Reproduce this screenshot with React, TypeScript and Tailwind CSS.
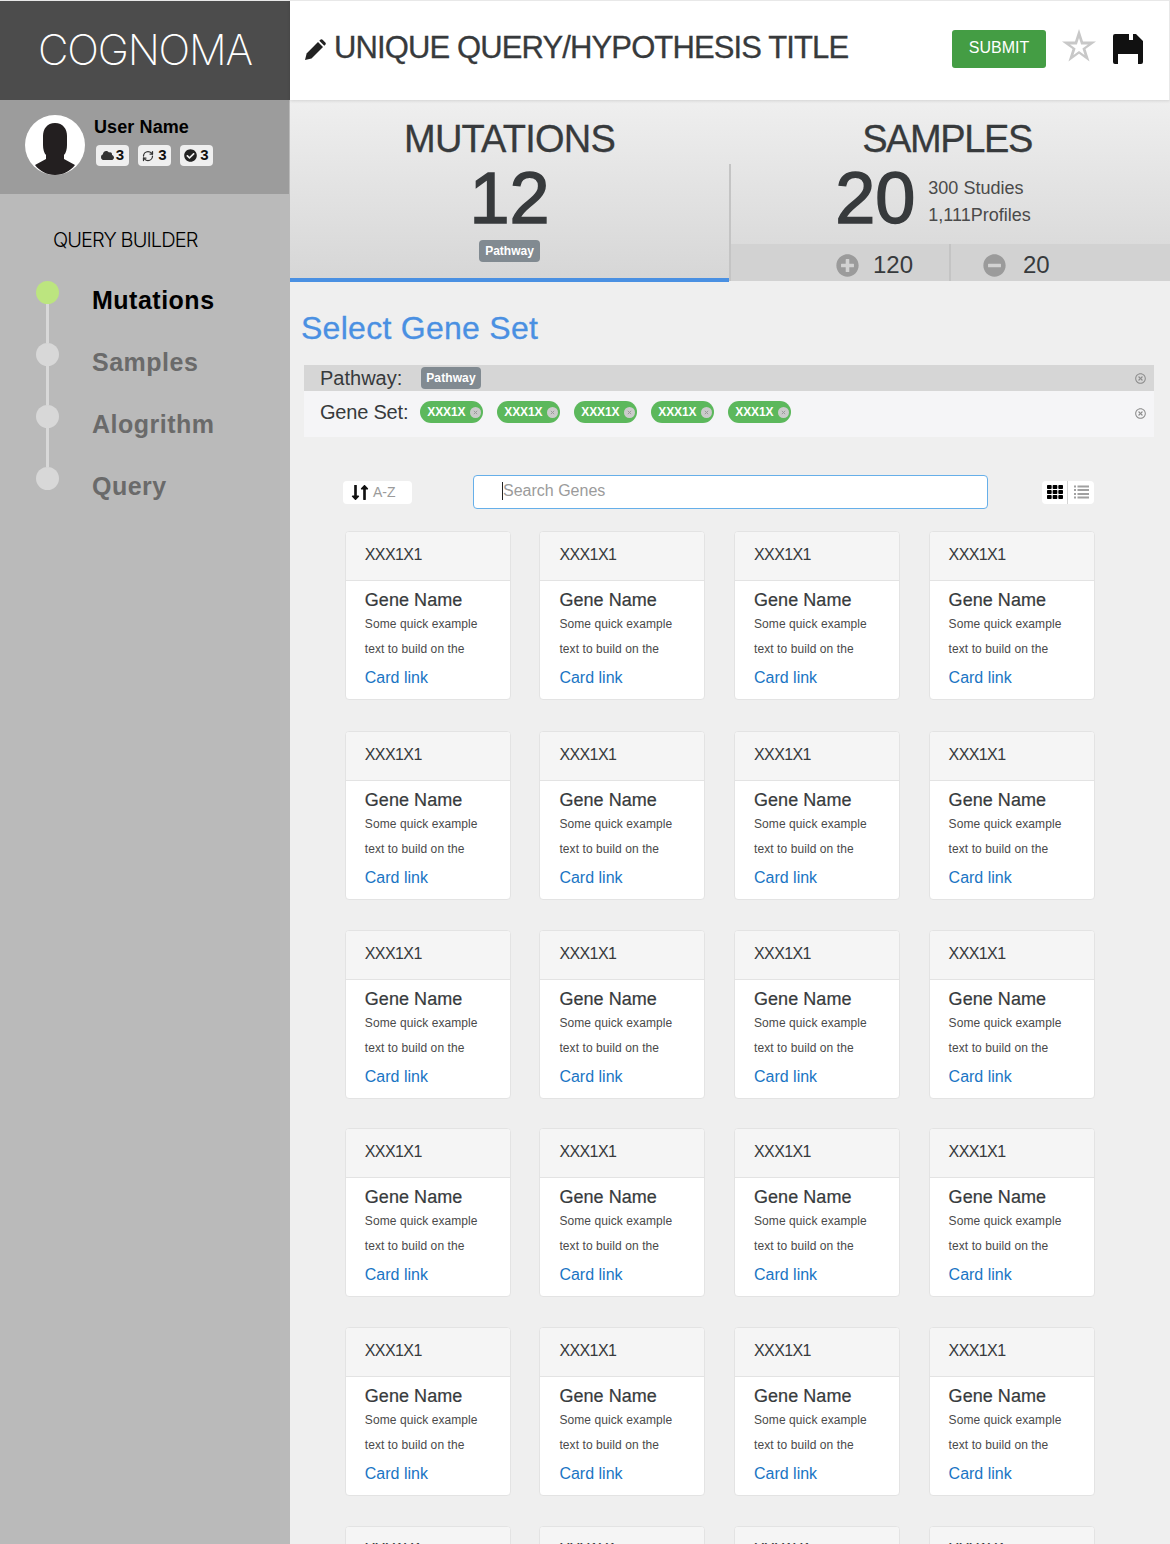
import { FaCheckCircle, FaCloud, FaLongArrowAltDown, FaLongArrowAltUp, FaMinusCircle, FaPlusCircle, FaRegTimesCircle, FaTh } from "react-icons/fa";
import { RefreshCw } from "lucide-react";

const steps = [
  { label: "Mutations", active: true },
  { label: "Samples", active: false },
  { label: "Alogrithm", active: false },
  { label: "Query", active: false },
];

function Avatar() {
  return (
    <svg viewBox="0 0 60 60" className="w-[60px] h-[60px] shrink-0">
      <circle cx="30" cy="30" r="30" fill="#fff" />
      <path
        d="M18 21c0-7 4-13 12-13s12 6 12 13v9c0 4-1 8-3 10v4l11 6c-4.500 6-12 10-20 10S14.500 56 10 50l11-6v-4c-2-2-3-6-3-10z"
        fill="#231f20"
      />
    </svg>
  );
}

function PencilIcon() {
  return (
    <svg viewBox="0 0 21 21" className="w-[21px] h-[21px] mt-[38px] shrink-0" fill="#222">
      <path d="M0 21l1.600-6.500L13 3l5 5L6.500 19.400z" />
      <path d="M14.300 1.700l1-1c.7-.7 1.600-.7 2.300 0l2.700 2.700c.7.700.7 1.600 0 2.300l-1 1z" />
    </svg>
  );
}

function StarIcon() {
  return (
    <svg viewBox="0 0 36 35" className="w-[36px] h-[33px] ml-[15px] mt-[28px] shrink-0" fill="#c8c8c8" fillRule="evenodd">
      <path d="M18 0l4.270 13.130H36.070L24.900 21.240l4.270 13.130L18 26.260 6.830 34.370l4.270-13.130L-.07 13.130h13.800zM18 9.500l-2.250 6.910H8.490l5.880 4.270-2.250 6.910L18 23.320l5.880 4.270-2.250-6.910 5.880-4.270h-7.260z" />
    </svg>
  );
}

function SaveIcon() {
  return (
    <svg viewBox="0 0 30 30" className="w-[30px] h-[30px] ml-[16px] mt-[33px] shrink-0" fill="#111" fillRule="evenodd">
      <path d="M2 0h21l7 7v21a2 2 0 0 1-2 2H2a2 2 0 0 1-2-2V2a2 2 0 0 1 2-2zM16 0v6h4V0zM5 20v10h20V20z" />
    </svg>
  );
}

function ListIcon() {
  return (
    <svg viewBox="0 0 15 14" className="w-[15px] h-[14px]" fill="#a0a0a0">
      <rect x="0" y="0.500" width="2" height="2" />
      <rect x="3.500" y="0.500" width="11.500" height="2" />
      <rect x="0" y="4" width="2" height="2" />
      <rect x="3.500" y="4" width="11.500" height="2" />
      <rect x="0" y="8" width="2" height="2" />
      <rect x="3.500" y="8" width="11.500" height="2" />
      <rect x="0" y="11.500" width="2" height="2" />
      <rect x="3.500" y="11.500" width="11.500" height="2" />
    </svg>
  );
}

function UserBadge({ icon, gap }: { icon: React.ReactNode; gap: string }) {
  return (
    <span className={`flex items-center justify-center ${gap} w-[33px] h-[21px] bg-[#efefef] rounded-[4px] text-[15px] font-bold text-[#111]`}>
      {icon}
      3
    </span>
  );
}

function GeneChip() {
  return (
    <span className="flex items-center justify-between w-[63px] h-[22px] pl-[7px] pr-[2px] bg-[#5cb85c] rounded-full text-white text-[12px] tracking-[-0.100px] font-bold">
      XXX1X
      <svg viewBox="0 0 10 10" className="w-[11px] h-[11px]">
        <circle cx="5" cy="5" r="5" fill="#cbcbcb" />
        <path d="M3.500 3.500l3 3m0-3l-3 3" stroke="#9a9a9a" strokeWidth="0.900" />
      </svg>
    </span>
  );
}

function GeneCard() {
  return (
    <div className="h-[169px] bg-white border border-[#e3e3e3] rounded-[4px] overflow-hidden">
      <div className="h-[49px] bg-[#f5f5f5] border-b border-[#e3e3e3] pl-[19px] pt-[13px] text-[16px] leading-[20px] tracking-[-0.600px] text-[#373a3c]">
        XXX1X1
      </div>
      <div className="pl-[19px]">
        <div className="mt-[8px] text-[18px] leading-[22px] tracking-[0.050px] text-[#373a3c] [-webkit-text-stroke:0.2px_#373a3c]">Gene Name</div>
        <div className="mt-[1px] text-[12px] leading-[25px] tracking-[0.080px] text-[#4a4a4a]">
          <div>Some quick example</div>
          <div>text to build on the</div>
        </div>
        <div className="mt-[6px] text-[16px] leading-[20px] text-[#1a75c4]">Card link</div>
      </div>
    </div>
  );
}

export default function App() {
  return (
    <div className="flex w-[1170px] h-[1544px] overflow-hidden bg-[#efefef] font-['Liberation_Sans',Arial,sans-serif]">
      {/* Sidebar */}
      <aside className="w-[290px] shrink-0 bg-[#bababa]">
        <div className="h-[100px] bg-[#4c4c4c] flex items-center justify-center border-t border-[#e8e8e8]">
          <span className="font-['Inter',sans-serif] font-extralight text-[42px] leading-[50px] -mt-[2px] tracking-[-1.200px] text-white">COGNOMA</span>
        </div>
        <div className="h-[94px] w-[289px] bg-[#9c9c9c] flex items-start pt-[15px] pl-[25px] gap-[9px]">
          <Avatar />
          <div className="pt-px">
            <div className="text-[18px] leading-[22px] tracking-[0.100px] font-bold text-black">User Name</div>
            <div className="flex gap-[9px] mt-[7px] ml-[2px]">
              <UserBadge gap="gap-[2px]" icon={<FaCloud className="text-[13px] text-[#333]" />} />
              <UserBadge gap="gap-[4px]" icon={<RefreshCw className="w-[12px] h-[12px] text-[#333]" strokeWidth={2.500} />} />
              <UserBadge gap="gap-[3px]" icon={<FaCheckCircle className="text-[13px] text-[#222]" />} />
            </div>
          </div>
        </div>
        <div className="pl-[53px] pt-[34px] text-[20px] leading-[24px] text-black tracking-[-0.900px] font-['Inter',sans-serif] font-light">
          QUERY BUILDER
        </div>
        <nav className="mt-[29px] pl-[36px]">
          {steps.map((step, i) => (
            <div key={step.label} className="flex h-[62px]">
              <div className="w-[23px] flex flex-col items-center">
                <span className={`w-[23px] h-[23px] rounded-full shrink-0 ${step.active ? "bg-[#bce57f]" : "bg-[#d8d8d8]"}`} />
                {i < steps.length - 1 && <span className="w-[3px] grow bg-[#d8d8d8]" />}
              </div>
              <div className={`ml-[33px] mt-[4px] text-[25px] leading-[30px] font-bold tracking-[0.500px] ${step.active ? "text-black" : "text-[#6a6a6a]"}`}>
                {step.label}
              </div>
            </div>
          ))}
        </nav>
      </aside>

      {/* Main */}
      <main className="grow min-w-0">
        <header className="h-[100px] bg-white border-t border-r border-[#e8e8e8] shadow-[0_1px_3px_rgba(0,0,0,0.12)] flex items-start pl-[15px] pr-[26px] relative">
          <PencilIcon />
          <h1 className="ml-[8px] mt-[29px] text-[31px] leading-[36px] tracking-[-0.880px] text-[#373a3c] [-webkit-text-stroke:0.3px_#373a3c] whitespace-nowrap">
            UNIQUE QUERY/HYPOTHESIS TITLE
          </h1>
          <button className="ml-auto mt-[29px] w-[94px] h-[38px] pb-[2px] bg-[#449d44] rounded-[3px] text-white text-[16px]">SUBMIT</button>
          <StarIcon />
          <SaveIcon />
        </header>

        <section className="h-[181px] flex bg-gradient-to-b from-[#efefef] to-[#d6d6d6]">
          <div className="w-[439px] h-[182px] border-b-[4px] border-[#4a90e2] flex flex-col items-center">
            <div className="mt-[17px] text-[38px] leading-[44px] tracking-[-0.800px] text-[#373a3c] [-webkit-text-stroke:0.3px_#373a3c]">MUTATIONS</div>
            <div className="text-[72px] leading-[72px] mt-[1px] text-[#373a3c] [-webkit-text-stroke:1.5px_#373a3c]">12</div>
            <span className="mt-[6px] h-[22px] px-[6px] flex items-center bg-[#818a91] rounded-[4px] text-white text-[12px] font-bold">Pathway</span>
          </div>
          <div className="grow flex flex-col">
            <div className="h-[144px] shrink-0 relative flex flex-col items-center pr-[5px]">
              <span className="absolute left-0 top-[64px] bottom-0 w-[2px] bg-[#c4c4c4]" />
              <div className="mt-[17px] text-[38px] leading-[44px] tracking-[-1.400px] text-[#373a3c] [-webkit-text-stroke:0.3px_#373a3c]">SAMPLES</div>
              <div className="flex mt-[1px] pr-[28px]">
                <div className="text-[72px] leading-[72px] text-[#373a3c] [-webkit-text-stroke:1.5px_#373a3c]">20</div>
                <div className="ml-[13px] mt-[13px] text-[18px] leading-[27px] text-[#4a4a4a] whitespace-nowrap">
                  <div>300 Studies</div>
                  <div>1,111Profiles</div>
                </div>
              </div>
            </div>
            <div className="h-[37px] flex bg-[#d2d2d2] border-l-2 border-[#c4c4c4]">
              <div className="w-[220px] border-r-2 border-[#c4c4c4] flex items-center pl-[105px] pt-[5px] gap-[14px] text-[24px] leading-[24px] text-[#373a3c]">
                <FaPlusCircle className="text-[23px] text-[#9b9b9b]" />
                120
              </div>
              <div className="flex items-center pl-[32px] pt-[5px] gap-[17px] text-[24px] leading-[24px] text-[#373a3c]">
                <FaMinusCircle className="text-[23px] text-[#9b9b9b]" />
                20
              </div>
            </div>
          </div>
        </section>

        <h2 className="mt-[28px] ml-[11px] text-[32px] leading-[38px] tracking-[0.280px] text-[#4a90e2] [-webkit-text-stroke:0.3px_#4a90e2]">Select Gene Set</h2>

        <div className="mt-[18px] ml-[14px] w-[850px]">
          <div className="h-[26px] bg-[#d6d6d6] flex items-center pl-[16px] pr-[8px] text-[20px] text-[#373a3c]">
            Pathway:
            <span className="ml-[19px] h-[22px] px-[5px] flex items-center bg-[#818a91] rounded-[4px] text-white text-[12px] font-bold tracking-[0.100px]">Pathway</span>
            <FaRegTimesCircle className="ml-auto text-[11px] text-[#8c8c8c]" />
          </div>
          <div className="h-[46px] bg-[#f5f5f7] flex items-start pt-[10px] pl-[16px] pr-[8px] text-[20px] leading-[22px] tracking-[-0.200px] text-[#373a3c]">
            Gene Set:
            <div className="flex ml-[12px] gap-[14px] tracking-normal">
              <GeneChip />
              <GeneChip />
              <GeneChip />
              <GeneChip />
              <GeneChip />
            </div>
            <FaRegTimesCircle className="ml-auto mt-[7px] text-[11px] text-[#8c8c8c]" />
          </div>
        </div>

        <div className="mt-[38px] ml-[53px] w-[751px] flex items-center h-[34px]">
          <div className="w-[69px] h-[23px] bg-white rounded-[4px] flex items-center pl-[8px] text-[14px] text-[#9b9b9b]">
            <span className="flex mr-[4px] text-[#111]">
              <FaLongArrowAltDown className="text-[17px] -mx-[4px]" />
              <FaLongArrowAltUp className="text-[17px] -mx-[4px]" />
            </span>
            A-Z
          </div>
          <div className="ml-[61px] w-[515px] h-[34px] bg-white border border-[#66afe9] rounded-[4px] pl-[28px] pb-[2px] flex items-center text-[16px] text-[#9b9b9b]">
            <span className="w-px h-[18px] bg-[#222]" />
            Search Genes
          </div>
          <div className="ml-auto w-[52px] h-[23px] bg-white rounded-[4px] flex items-center">
            <span className="w-[26px] flex justify-center border-r border-[#d4d4d4] h-full items-center">
              <FaTh className="text-[16px] text-black" />
            </span>
            <span className="grow flex justify-center">
              <ListIcon />
            </span>
          </div>
        </div>

        <div className="mt-[22px] ml-[54.800px] grid grid-cols-[repeat(4,166px)] grid-rows-[170px_169px_168px_169px_169px_169px] gap-x-[28.600px] gap-y-[30px] items-start">
          {Array.from({ length: 24 }).map((_, i) => (
            <GeneCard key={i} />
          ))}
        </div>
      </main>
    </div>
  );
}
